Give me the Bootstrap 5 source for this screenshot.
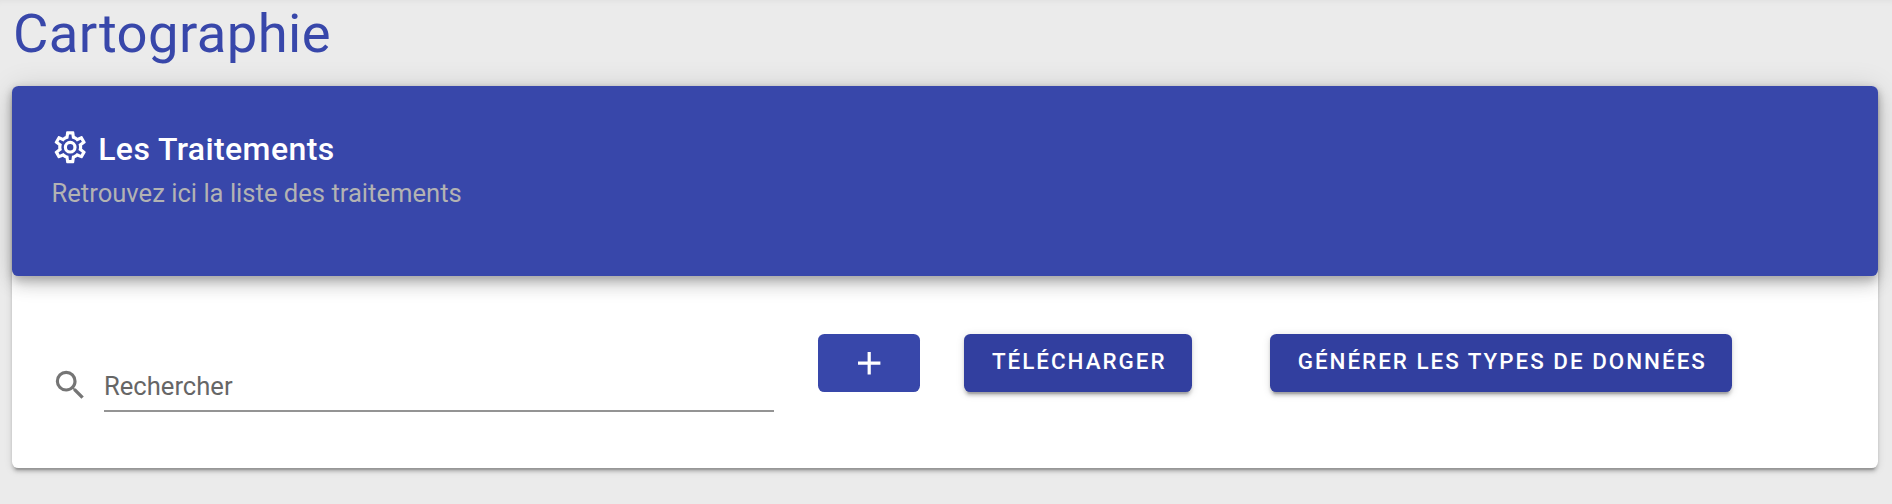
<!DOCTYPE html>
<html lang="fr">
<head>
<meta charset="utf-8">
<meta name="viewport" content="width=device-width, initial-scale=1">
<title>Cartographie</title>
<link href="https://cdn.jsdelivr.net/npm/bootstrap@5.3.0/dist/css/bootstrap.min.css" rel="stylesheet">
<style>
  body { background: #ebebeb; font-family: Roboto, "Liberation Sans", sans-serif; height: 504px; overflow: hidden; box-shadow: inset 0 6px 6px -5px rgba(0,0,0,.05); }
  .page-area { padding: 0 14px 0 12px; }
  .page-title { font-size: 54.4px; font-weight: 400; line-height: 64px; letter-spacing: .4px; color: #3847aa; height: 86px; padding: 2px 0 0 1px; }
  .panel { height: 382px; border: 0; border-radius: 6.4px; box-shadow: 0 4.8px 1.6px -3.2px rgba(0,0,0,.2), 0 3.2px 3.2px rgba(0,0,0,.14), 0 1.6px 8px rgba(0,0,0,.12); }
  .panel-head { height: 190px; background: #3847aa; border-radius: 6.4px; padding: 41px 39px 0; box-shadow: 0 4.8px 8px -1.6px rgba(0,0,0,.2), 0 9.6px 16px rgba(0,0,0,.14), 0 1.6px 28.8px rgba(0,0,0,.12); }
  .panel-title { font-size: 32px; font-weight: 500; line-height: 44px; letter-spacing: .4px; gap: 8.8px; }
  .panel-title .mdi { margin-bottom: 3px; }
  .panel-note { font-size: 25.6px; line-height: 38px; color: #b3b3b3; padding: 3px 0 0 .5px; }
  .mdi { width: 38.4px; height: 38.4px; fill: currentColor; flex: none; }
  .panel-tools { padding: 58px 39px 0; }
  .search-box { width: 723px; margin: 26px 44px 0 0; gap: 14.6px; color: #757575; }
  .search-box .mdi { margin-top: 6px; }
  .search-input { border: 0; border-bottom: 2px solid #949494; border-radius: 0; height: 52px; padding: 1px 0 0; font-size: 25.6px; background: none; }
  .search-input::placeholder { color: #666; }
  .tool-btn { height: 58px; padding: 0 0 2px; border: 0; border-radius: 6.4px; background: #323f9f; color: #fff; font-size: 22.4px; font-weight: 500; letter-spacing: 2px; text-indent: 2.5px; white-space: nowrap; flex: none; box-shadow: 0 4.8px 1.6px -3.2px rgba(0,0,0,.2), 0 3.2px 3.2px rgba(0,0,0,.14), 0 1.6px 8px rgba(0,0,0,.12); }
  .btn-add { width: 102px; background: #3847aa; box-shadow: none; margin-right: 44px; padding: 0 0 0 1px; }
  .btn-download { width: 228px; margin-right: 78px; }
  .btn-generate { width: 462px; }
</style>
</head>
<body>
<main class="page-area">
  <h1 class="page-title mb-0">Cartographie</h1>
  <section class="card panel">
    <header class="panel-head">
      <h2 class="panel-title d-flex align-items-center text-white mb-0">
        <svg class="mdi" viewBox="0 0 24 24" aria-hidden="true"><path d="M12,8A4,4 0 0,1 16,12A4,4 0 0,1 12,16A4,4 0 0,1 8,12A4,4 0 0,1 12,8M12,10A2,2 0 0,0 10,12A2,2 0 0,0 12,14A2,2 0 0,0 14,12A2,2 0 0,0 12,10M10,22C9.75,22 9.54,21.82 9.5,21.58L9.13,18.93C8.5,18.68 7.96,18.34 7.44,17.94L4.95,18.95C4.73,19.03 4.46,18.95 4.34,18.73L2.34,15.27C2.21,15.05 2.27,14.78 2.46,14.63L4.57,12.97L4.5,12L4.57,11L2.46,9.37C2.27,9.22 2.21,8.95 2.34,8.73L4.34,5.27C4.46,5.05 4.73,4.96 4.95,5.05L7.44,6.05C7.96,5.66 8.5,5.32 9.13,5.07L9.5,2.42C9.54,2.18 9.75,2 10,2H14C14.25,2 14.46,2.18 14.5,2.42L14.87,5.07C15.5,5.32 16.04,5.66 16.56,6.05L19.05,5.05C19.27,4.96 19.54,5.05 19.66,5.27L21.66,8.73C21.79,8.95 21.73,9.22 21.54,9.37L19.43,11L19.5,12L19.43,13L21.54,14.63C21.73,14.78 21.79,15.05 21.66,15.27L19.66,18.73C19.54,18.95 19.27,19.04 19.05,18.95L16.56,17.95C16.04,18.34 15.5,18.68 14.87,18.93L14.5,21.58C14.46,21.82 14.25,22 14,22H10M11.25,4L10.88,6.61C9.68,6.86 8.62,7.5 7.85,8.39L5.44,7.35L4.69,8.65L6.8,10.2C6.4,11.37 6.4,12.64 6.8,13.8L4.68,15.36L5.43,16.66L7.86,15.62C8.63,16.5 9.68,17.14 10.87,17.38L11.24,20H12.76L13.13,17.39C14.32,17.14 15.37,16.5 16.14,15.62L18.57,16.66L19.32,15.36L17.2,13.81C17.6,12.64 17.6,11.37 17.2,10.2L19.31,8.65L18.56,7.35L16.15,8.39C15.38,7.5 14.32,6.86 13.12,6.62L12.75,4H11.25Z"/></svg>
        <span>Les Traitements</span>
      </h2>
      <p class="panel-note mb-0">Retrouvez ici la liste des traitements</p>
    </header>
    <div class="panel-tools d-flex align-items-start">
      <div class="search-box d-flex align-items-start flex-shrink-0">
        <svg class="mdi" viewBox="0 0 24 24" aria-hidden="true"><path d="M9.5,3A6.5,6.5 0 0,1 16,9.5C16,11.11 15.41,12.59 14.44,13.73L14.71,14H15.5L20.5,19L19,20.5L14,15.5V14.71L13.73,14.44C12.59,15.41 11.11,16 9.5,16A6.5,6.5 0 0,1 3,9.5A6.5,6.5 0 0,1 9.5,3M9.5,5C7,5 5,7 5,9.5C5,12 7,14 9.5,14C12,14 14,12 14,9.5C14,7 12,5 9.5,5Z"/></svg>
        <input class="form-control search-input" type="text" placeholder="Rechercher" aria-label="Rechercher">
      </div>
      <button class="btn tool-btn btn-add d-flex align-items-center justify-content-center" type="button" aria-label="Ajouter">
        <svg class="mdi" viewBox="0 0 24 24" aria-hidden="true"><path d="M19,13H13V19H11V13H5V11H11V5H13V11H19V13Z"/></svg>
      </button>
      <button class="btn tool-btn btn-download" type="button">TÉLÉCHARGER</button>
      <button class="btn tool-btn btn-generate" type="button">GÉNÉRER LES TYPES DE DONNÉES</button>
    </div>
  </section>
</main>
<script src="https://cdn.jsdelivr.net/npm/bootstrap@5.3.0/dist/js/bootstrap.bundle.min.js"></script>
</body>
</html>
